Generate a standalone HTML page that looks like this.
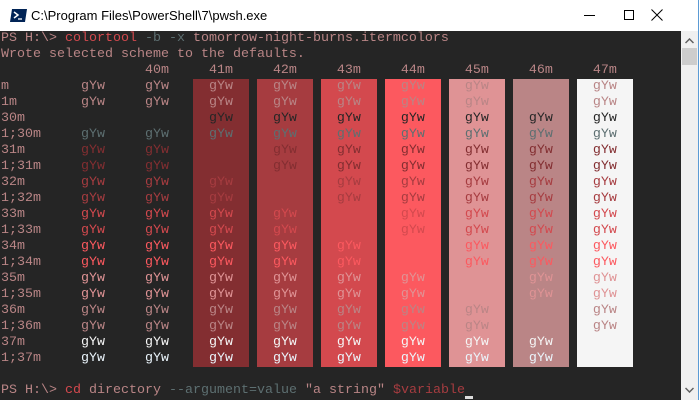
<!DOCTYPE html>
<html><head><meta charset="utf-8"><style>
*{margin:0;padding:0;box-sizing:border-box}
html,body{width:699px;height:400px;overflow:hidden;background:#fff}
#title{position:absolute;left:0;top:0;width:699px;height:31px;background:#fff;border-right:1px solid #5b9bd5}
#title .t{position:absolute;left:31px;top:8px;font:13px "Liberation Sans",sans-serif;color:#000}
#term{position:absolute;left:0;top:31px;width:681px;height:369px;background:#252525}
#sb{position:absolute;left:681px;top:31px;width:17px;height:369px;background:#f0f0f0}
#edge{position:absolute;left:698px;top:0;width:1px;height:400px;background:#5b9bd5}
.l{position:absolute;left:1px;font:13.333px/16px "Liberation Mono",monospace;white-space:pre;color:#b98586;height:16px}
.bx{position:absolute;top:79px;height:288px;width:56px}
.a{color:#262626}.g{color:#5d6f71}.r1{color:#832e31}.r2{color:#a63c40}.r3{color:#d3494e}.r4{color:#fc595f}.r5{color:#df9395}.r6{color:#ba8586}.r7{color:#f5f5f5}.w{color:#eaf4fb}
</style></head><body>
<div id="title">
<svg style="position:absolute;left:10px;top:9px" width="17" height="13" viewBox="0 0 17 13"><polygon points="2,0 17,0 15,13 0,13" fill="#012456"/><path d="M4 3 L8 6 L4 9" stroke="#fff" stroke-width="1.5" fill="none"/><path d="M8 10 H12" stroke="#fff" stroke-width="1.3"/></svg>
<div class="t">C:\Program Files\PowerShell\7\pwsh.exe</div>
<div style="position:absolute;left:584px;top:15px;width:11px;height:1px;background:#000"></div>
<div style="position:absolute;left:624px;top:10px;width:10px;height:10px;border:1px solid #000"></div>
<svg style="position:absolute;left:651px;top:9px" width="12" height="12"><path d="M0.5 0.5 L11.5 11.5 M11.5 0.5 L0.5 11.5" stroke="#000" stroke-width="1"/></svg>
</div>
<div id="term"></div>
<div id="sb">
<svg style="position:absolute;left:4px;top:7px" width="9" height="6"><path d="M0.5 5 L4.5 1 L8.5 5" stroke="#606060" stroke-width="1.5" fill="none"/></svg>
<div style="position:absolute;left:1px;top:17px;width:15px;height:17px;background:#cdcdcd"></div>
<svg style="position:absolute;left:4px;top:356px" width="9" height="6"><path d="M0.5 1 L4.5 5 L8.5 1" stroke="#606060" stroke-width="1.5" fill="none"/></svg>
</div>
<div id="edge"></div>

<div class="bx" style="left:193px;background:#832e31"></div>
<div class="bx" style="left:257px;background:#a63c40"></div>
<div class="bx" style="left:321px;background:#d3494e"></div>
<div class="bx" style="left:385px;background:#fc595f"></div>
<div class="bx" style="left:449px;background:#df9395"></div>
<div class="bx" style="left:513px;background:#ba8586"></div>
<div class="bx" style="left:577px;background:#f5f5f5"></div>

<div class="l" style="top:31px">PS H:\&gt; <span class="r3">colortool</span> <span class="g">-b -x</span> tomorrow-night-burns.itermcolors</div>
<div class="l" style="top:47px">Wrote selected scheme to the defaults.</div>
<div class="l" style="top:63px">                  40m     41m     42m     43m     44m     45m     46m     47m</div>
<div class="l" style="top:79px">m         gYw     gYw     gYw     gYw     gYw     gYw     gYw             gYw</div>
<div class="l" style="top:95px">1m        gYw     gYw     gYw     gYw     gYw     gYw     gYw             gYw</div>
<div class="l" style="top:111px">30m       <span class="a">                gYw     gYw     gYw     gYw     gYw     gYw     gYw</span></div>
<div class="l" style="top:127px">1;30m     <span class="g">gYw     gYw     gYw     gYw     gYw     gYw     gYw     gYw     gYw</span></div>
<div class="l" style="top:143px">31m       <span class="r1">gYw     gYw             gYw     gYw     gYw     gYw     gYw     gYw</span></div>
<div class="l" style="top:159px">1;31m     <span class="r1">gYw     gYw             gYw     gYw     gYw     gYw     gYw     gYw</span></div>
<div class="l" style="top:175px">32m       <span class="r2">gYw     gYw     gYw             gYw     gYw     gYw     gYw     gYw</span></div>
<div class="l" style="top:191px">1;32m     <span class="r2">gYw     gYw     gYw             gYw     gYw     gYw     gYw     gYw</span></div>
<div class="l" style="top:207px">33m       <span class="r3">gYw     gYw     gYw     gYw             gYw     gYw     gYw     gYw</span></div>
<div class="l" style="top:223px">1;33m     <span class="r3">gYw     gYw     gYw     gYw             gYw     gYw     gYw     gYw</span></div>
<div class="l" style="top:239px">34m       <span class="r4">gYw     gYw     gYw     gYw     gYw             gYw     gYw     gYw</span></div>
<div class="l" style="top:255px">1;34m     <span class="r4">gYw     gYw     gYw     gYw     gYw             gYw     gYw     gYw</span></div>
<div class="l" style="top:271px">35m       <span class="r5">gYw     gYw     gYw     gYw     gYw     gYw             gYw     gYw</span></div>
<div class="l" style="top:287px">1;35m     <span class="r5">gYw     gYw     gYw     gYw     gYw     gYw             gYw     gYw</span></div>
<div class="l" style="top:303px">36m       <span class="r6">gYw     gYw     gYw     gYw     gYw     gYw     gYw             gYw</span></div>
<div class="l" style="top:319px">1;36m     <span class="r6">gYw     gYw     gYw     gYw     gYw     gYw     gYw             gYw</span></div>
<div class="l" style="top:335px">37m       <span class="r7">gYw     gYw     gYw     gYw     gYw     gYw     gYw     gYw</span></div>
<div class="l" style="top:351px">1;37m     <span class="w">gYw     gYw     gYw     gYw     gYw     gYw     gYw     gYw</span></div>
<div class="l" style="top:383px">PS H:\&gt; <span class="r3">cd</span> directory <span class="g">--argument=value</span> "a string" <span class="r2">$variable</span></div>
<div style="position:absolute;left:465px;top:396px;width:8px;height:3px;background:#dcdcdc"></div>
</body></html>
